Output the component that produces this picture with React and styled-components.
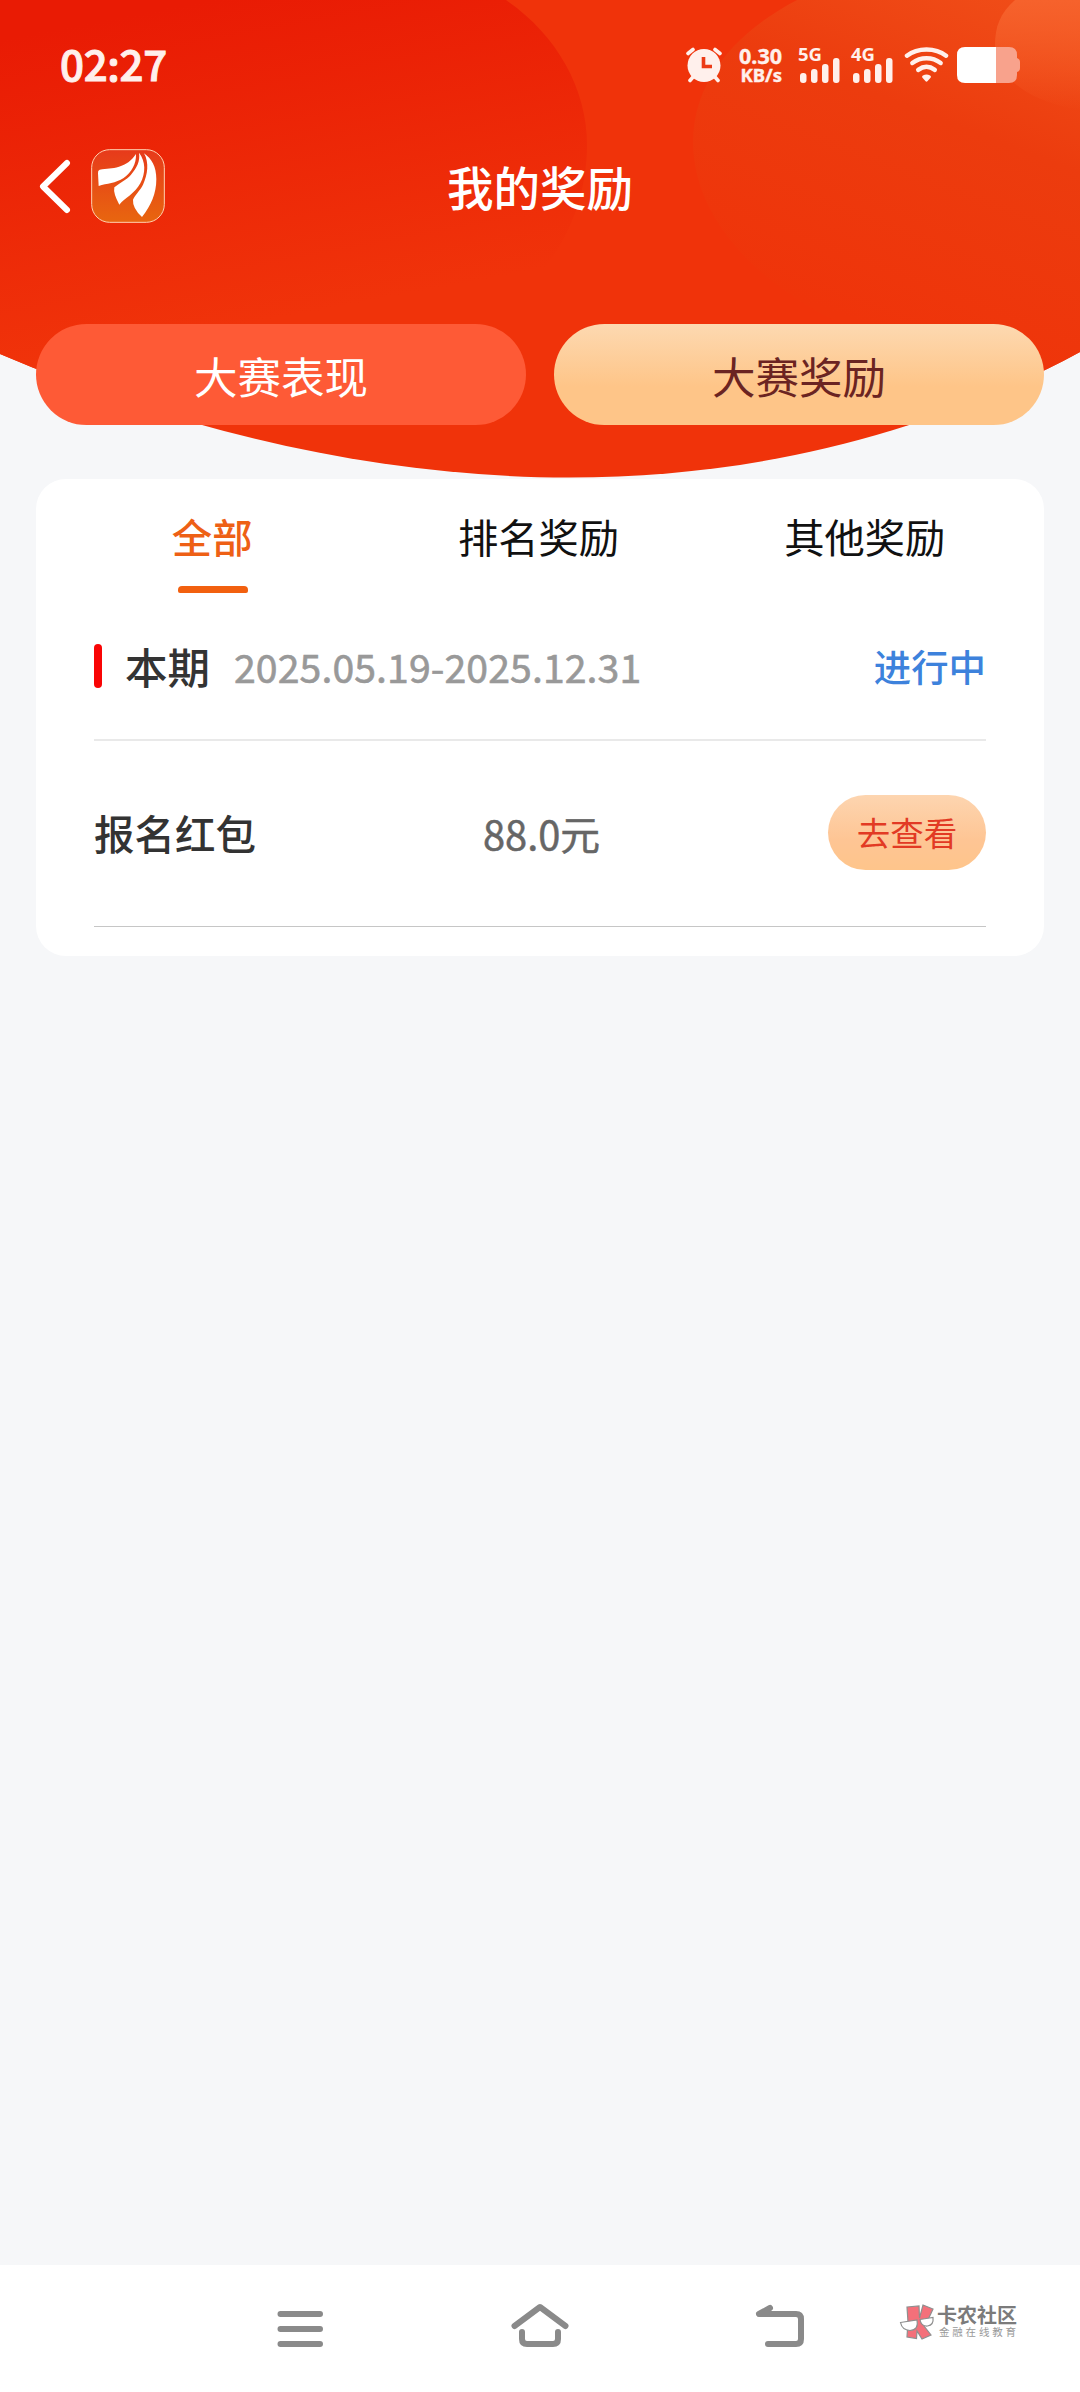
import React from 'react';
import styled, { createGlobalStyle } from 'styled-components';

const GlobalStyle = createGlobalStyle`
  * {
    box-sizing: border-box;
  }
  body {
    margin: 0;
    background: #f6f7f9;
    font-family: "Noto Sans CJK SC", "Noto Sans", sans-serif;
  }
  button {
    border: 0;
    padding: 0;
    background: none;
    font-family: inherit;
  }
`;

const Page = styled.div`
  position: relative;
  display: flex;
  flex-direction: column;
  width: 1080px;
  height: 2392px;
  overflow: hidden;
  background: #f6f7f9;
`;

const Backdrop = styled.svg`
  position: absolute;
  top: 0;
  left: 0;
  width: 1080px;
  height: 480px;
`;

const Content = styled.main`
  position: relative;
  flex: 1;
`;

const StatusBar = styled.div`
  display: flex;
  justify-content: space-between;
  align-items: center;
  height: 130px;
  padding: 0 60px;
  color: #fff0ec;
`;

const Clock = styled.span`
  margin-bottom: 5px;
  font-size: 42px;
  font-weight: 500;
  letter-spacing: -0.3px;
  line-height: 50px;
  -webkit-text-stroke: 1px currentColor;
`;

const StatusIcons = styled.div`
  display: flex;
  align-items: center;
  height: 36px;
  svg {
    display: block;
  }
`;

const Speed = styled.div`
  width: 47px;
  margin: 0 16px 0 12px;
  font-family: "Noto Sans", sans-serif;
  font-weight: 700;
  text-align: right;
  white-space: nowrap;
  -webkit-text-stroke: 0.4px currentColor;
  div {
    font-size: 21.5px;
    line-height: 19px;
  }
  div + div {
    font-size: 18.5px;
    line-height: 19px;
  }
`;

const SignalBox = styled.div`
  display: flex;
  flex-direction: column;
  width: 42px;
  height: 36px;
  margin-right: 11px;
  font-family: "Noto Sans", sans-serif;
  font-size: 18.5px;
  font-weight: 700;
  line-height: 14px;
  svg {
    margin: -3px 0 0 2px;
  }
`;

const TitleBar = styled.header`
  display: grid;
  grid-template-columns: 1fr auto 1fr;
  align-items: center;
  height: 112px;
  padding: 0 38px;
`;

const TitleLeft = styled.div`
  display: flex;
  align-items: center;
  gap: 20px;
`;

const Title = styled.h1`
  margin: 0;
  color: #fff;
  font-size: 46.5px;
  font-weight: 500;
  line-height: 60px;
`;

const Segments = styled.div`
  display: grid;
  grid-template-columns: 1fr 1fr;
  gap: 28px;
  margin: 82px 36px 0;
`;

const Segment = styled.button`
  height: 101px;
  padding-top: 1px;
  border-radius: 51px;
  font-size: 43.5px;
  color: ${({ $active }) => ($active ? '#6b2422' : '#fff')};
  background: ${({ $active }) => ($active
    ? 'linear-gradient(180deg, #fdd9b1 0%, #fec588 62%, #fec588 100%)'
    : '#fe5a36')};
`;

const Card = styled.section`
  height: 477px;
  margin: 54px 36px 0;
  border-radius: 30px;
  background: #fff;
`;

const Tabs = styled.nav`
  display: grid;
  grid-template-columns: repeat(3, 1fr);
  height: 119px;
  padding: 0 16px 0 13px;
`;

const Tab = styled.button`
  display: flex;
  flex-direction: column;
  align-items: center;
  padding-top: 28px;
  color: ${({ $active }) => ($active ? '#ee6015' : '#111')};
  font-size: 40.3px;
  font-weight: ${({ $active }) => ($active ? 500 : 400)};
  line-height: 58px;
  &::after {
    content: '';
    width: 70px;
    height: 7px;
    margin: 21px 0 0 2px;
    border-radius: 4px 4px 2px 2px;
    background: ${({ $active }) => ($active ? '#f2600f' : 'transparent')};
  }
`;

const Row = styled.div`
  display: flex;
  align-items: center;
  margin: 0 58px;
`;

const PeriodRow = styled(Row)`
  height: 143px;
  padding-bottom: 6px;
  border-bottom: 2px solid #e9e9e9;
`;

const Marker = styled.i`
  width: 8px;
  height: 44px;
  margin-right: 23px;
  border-radius: 4px;
  background: #f90505;
`;

const PeriodLabel = styled.span`
  color: #333;
  font-size: 42.5px;
  font-weight: 500;
`;

const PeriodDates = styled.span`
  margin-left: 24px;
  color: #999;
  font-size: 39.2px;
  letter-spacing: 0.1px;
  -webkit-text-stroke: 0.6px currentColor;
`;

const Status = styled.span`
  margin-left: auto;
  color: #3d82dc;
  font-size: 37.4px;
  font-weight: 500;
`;

const RewardRow = styled(Row)`
  display: grid;
  grid-template-columns: 389px 1fr 158px;
  height: 186px;
  padding-bottom: 2px;
  border-bottom: 1px solid #c6c6c6;
`;

const RewardName = styled.span`
  color: #333;
  font-size: 40.5px;
  font-weight: 500;
`;

const RewardAmount = styled.span`
  color: #666;
  font-size: 39.8px;
  -webkit-text-stroke: 0.5px currentColor;
`;

const ViewButton = styled.button`
  height: 75px;
  padding-bottom: 2px;
  border-radius: 38px;
  color: #e23a24;
  font-size: 33.5px;
  background: linear-gradient(180deg, #fdd5b0 0%, #fec594 60%, #fec58b 100%);
`;

const SystemNav = styled.footer`
  position: relative;
  display: grid;
  grid-template-columns: 60px 60px 60px;
  justify-content: center;
  gap: 180px;
  height: 127px;
  padding-top: 36px;
  background: #fff;
`;

// watermark floats over the system navigation
const Watermark = styled.div`
  position: absolute;
  top: 39px;
  left: 899px;
  display: flex;
  gap: 1px;
`;

const WatermarkName = styled.div`
  color: #7b7b7b;
  font-size: 20px;
  font-weight: 700;
  line-height: 21px;
`;

const WatermarkSlogan = styled.div`
  padding-left: 2px;
  color: #999;
  font-size: 10.5px;
  letter-spacing: 2.8px;
  line-height: 14px;
  white-space: nowrap;
`;

const HeaderBackdrop = () => (
  <Backdrop viewBox="0 0 1080 480">
    <defs>
      <clipPath id="bowl">
        <path d="M0 0H1080V352C760 525 375 513 0 354Z" />
      </clipPath>
      <linearGradient id="deep" gradientUnits="userSpaceOnUse" x1="210" y1="0" x2="270" y2="320">
        <stop offset="0" stopColor="#e91b04" />
        <stop offset="1" stopColor="#f0330a" />
      </linearGradient>
      <linearGradient id="warm" gradientUnits="userSpaceOnUse" x1="1010" y1="-10" x2="880" y2="330">
        <stop offset="0" stopColor="#f04d18" />
        <stop offset="0.4" stopColor="#ec3c0e" />
        <stop offset="1" stopColor="#ef340a" />
      </linearGradient>
      <linearGradient id="glow" x1="0" y1="0" x2="0" y2="1">
        <stop offset="0" stopColor="#f6622c" />
        <stop offset="1" stopColor="#f6622c" stopOpacity="0" />
      </linearGradient>
    </defs>
    <g clipPath="url(#bowl)">
      <rect width="1080" height="480" fill="#f0330a" />
      <path d="M0 0H506C556 34 587 88 587 145C587 210 555 275 490 320L0 410Z" fill="url(#deep)" />
      <path d="M797 0C730 35 693 85 693 142C693 225 770 300 880 340L1080 380V0Z" fill="url(#warm)" />
      <path d="M1015 0C1000 13 995 27 995 45C995 70 1018 100 1080 110V0Z" fill="url(#glow)" />
    </g>
  </Backdrop>
);

const AlarmIcon = () => (
  <svg width="38" height="36" viewBox="0 0 38 36" fill="none" stroke="currentColor" strokeLinecap="round">
    <circle cx="19" cy="18.500" r="16.500" fill="currentColor" stroke="none" />
    <path d="M3 6.500L8 2.500M35 6.500L30 2.500" strokeWidth="3.600" />
    <path d="M8 30L5 33.500M30 30L33 33.500" strokeWidth="3.600" />
    <path d="M18.500 10V19.500H27" stroke="#ec3b17" strokeWidth="3.600" strokeLinecap="butt" />
  </svg>
);

const Signal = ({ label }) => (
  <SignalBox>
    {label}
    <svg width="40" height="25" viewBox="0 0 40 25" fill="currentColor">
      <rect x="0" y="15" width="6.500" height="10" rx="3" />
      <rect x="11" y="11" width="6.500" height="14" rx="3" />
      <rect x="22" y="6" width="6.500" height="19" rx="3" />
      <rect x="33" y="0" width="6.500" height="25" rx="3" />
    </svg>
  </SignalBox>
);

const WifiIcon = () => (
  <svg width="45" height="36" viewBox="0 0 46 36" fill="none" stroke="currentColor" strokeWidth="4.500" strokeLinecap="round">
    <path d="M3 8.500C14 0 32 0 43 8.500" />
    <path d="M8.500 16C17 9.500 29 9.500 37.500 16" />
    <path d="M14.500 23C20 19 26 19 31.500 23" />
    <path d="M20 30Q23 28.500 26 30L23 33.500Z" fill="currentColor" strokeWidth="3" strokeLinejoin="round" />
  </svg>
);

const BatteryIcon = styled(({ className }) => (
  <svg className={className} width="63" height="36" viewBox="0 0 63 36">
    <path d="M39 0H52Q60 0 60 8V11Q63 12 63 15V21Q63 24 60 25V28Q60 36 52 36H39Z" fill="#f8a28c" />
    <path d="M39 0H8Q0 0 0 8V28Q0 36 8 36H39Z" fill="#fff" />
  </svg>
))`
  margin-left: 8px;
`;

const BackIcon = () => (
  <svg width="33" height="56" viewBox="0 0 33 56" fill="none" stroke="#fff" strokeWidth="6" strokeLinecap="round" strokeLinejoin="round">
    <path d="M29 5L5 28.500L29 52" />
  </svg>
);

const AppLogo = () => (
  <svg width="74" height="74" viewBox="184 57 222 222">
    <defs>
      <linearGradient id="logo" x1="0" y1="0" x2="0" y2="1">
        <stop offset="0" stopColor="#e73a1b" />
        <stop offset="1" stopColor="#e8660f" />
      </linearGradient>
    </defs>
    <rect x="186" y="59" width="218" height="218" rx="54" fill="url(#logo)" stroke="#ffd0b0" strokeWidth="3" />
    <g fill="#fff">
      <path d="M319 72C304 93 290 104 268 110C247 116 232 115 210 119Q204 121 205 130L207 168C232 160 258 160 282 144C306 126 320 102 319 72Z" />
      <path d="M328 68C332 92 322 113 304 134C290 150 268 160 254 172Q250 190 269 224C284 206 316 190 332 160C349 128 348 94 328 68Z" />
      <path d="M343 70C359 98 354 134 340 164C331 182 316 194 310 209Q308 234 337 261C364 228 380 190 380 148C380 110 366 86 343 70Z" />
    </g>
  </svg>
);

const NavIcon = ({ d }) => (
  <svg width="60" height="50" viewBox="0 0 60 50" fill="none" stroke="#8a8a8a" strokeWidth="6" strokeLinecap="round" strokeLinejoin="round">
    <path d={d} />
  </svg>
);

const WatermarkLogo = () => (
  <svg width="37" height="38" viewBox="0 0 37 38" stroke="#8f8f8f" strokeWidth="1.200">
    <path d="M8 3L20 2L20.500 14L24 1L34 5L28 18L25 22L32 31L23 35L18 27L17.500 34.500L8 33L9 18Z" fill="#f4707a" />
    <path d="M1.500 18.500L18 16Q20 26 11 26.500Q3 26 1.500 18.500ZM21 15.500L34 13.500Q35 21 28.500 22Q22 22.500 21 15.500Z" fill="#fff" />
  </svg>
);

const tabs = ['全部', '排名奖励', '其他奖励'];

const App = () => (
  <>
    <GlobalStyle />
    <Page>
      <HeaderBackdrop />
      <Content>
        <StatusBar>
          <Clock>02:27</Clock>
          <StatusIcons>
            <AlarmIcon />
            <Speed>
              <div>0.30</div>
              <div>KB/s</div>
            </Speed>
            <Signal label="5G" />
            <Signal label="4G" />
            <WifiIcon />
            <BatteryIcon />
          </StatusIcons>
        </StatusBar>
        <TitleBar>
          <TitleLeft>
            <BackIcon />
            <AppLogo />
          </TitleLeft>
          <Title>我的奖励</Title>
        </TitleBar>
        <Segments>
          <Segment>大赛表现</Segment>
          <Segment $active>大赛奖励</Segment>
        </Segments>
        <Card>
          <Tabs>
            {tabs.map((tab, i) => (
              <Tab key={tab} $active={i === 0}>{tab}</Tab>
            ))}
          </Tabs>
          <PeriodRow>
            <Marker />
            <PeriodLabel>本期</PeriodLabel>
            <PeriodDates>2025.05.19-2025.12.31</PeriodDates>
            <Status>进行中</Status>
          </PeriodRow>
          <RewardRow>
            <RewardName>报名红包</RewardName>
            <RewardAmount>88.0元</RewardAmount>
            <ViewButton>去查看</ViewButton>
          </RewardRow>
        </Card>
      </Content>
      <SystemNav>
        <NavIcon d="M10.500 13H50M10.500 28H50M10.500 43H50" />
        <NavIcon d="M4.500 25L30 6L55.500 25M12 31V38Q12 43 17 43H43Q48 43 48 38V31" />
        <NavIcon d="M20 7L9 13H46Q51 13 51 18V38Q51 43 46 43H18" />
        <Watermark>
          <WatermarkLogo />
          <div>
            <WatermarkName>卡农社区</WatermarkName>
            <WatermarkSlogan>金融在线教育</WatermarkSlogan>
          </div>
        </Watermark>
      </SystemNav>
    </Page>
  </>
);

export default App;
